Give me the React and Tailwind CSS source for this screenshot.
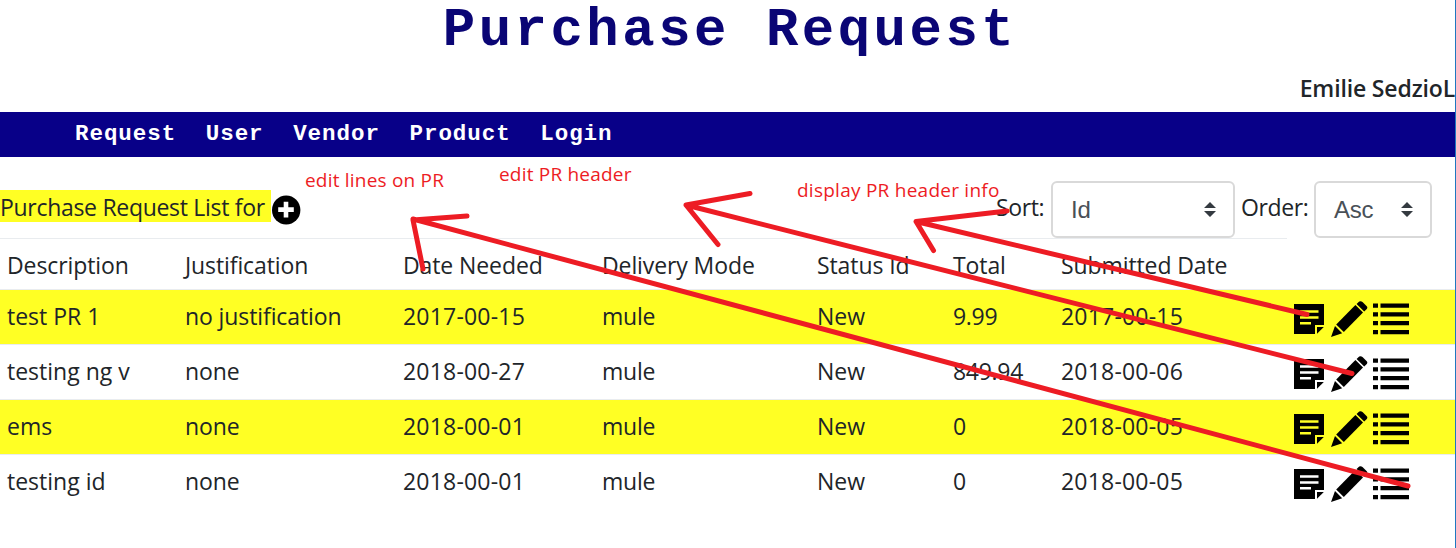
import React from "react";

const COLUMNS = [
  "Description",
  "Justification",
  "Date Needed",
  "Delivery Mode",
  "Status Id",
  "Total",
  "Submitted Date",
];

const ROWS = [
  ["test PR 1", "no justification", "2017-00-15", "mule", "New", "9.99", "2017-00-15"],
  ["testing ng v", "none", "2018-00-27", "mule", "New", "849.94", "2018-00-06"],
  ["ems", "none", "2018-00-01", "mule", "New", "0", "2018-00-05"],
  ["testing id", "none", "2018-00-01", "mule", "New", "0", "2018-00-05"],
];

const CELL_TRACKING = [
  "",
  "tracking-[-0.1px]",
  "tracking-[0.2px]",
  "tracking-[-0.2px]",
  "",
  "tracking-[-0.3px]",
  "tracking-[0.2px]",
];

const GRID =
  "grid grid-cols-[178px_218px_199px_215px_136px_108px_233px_168px] whitespace-nowrap";

function NoteIcon() {
  return (
    <svg className="h-[30px] w-[30px]" viewBox="0 0 30 30">
      <path d="M0 0H30V21H21V30H0Z" fill="#000" />
      <path d="M23 23H29.8L23 29.8Z" fill="#000" />
      <path d="M6 7.5H24.5M6 13.5H24.5M6 19.3H17" stroke="currentColor" strokeWidth="2.4" />
    </svg>
  );
}

function PencilIcon() {
  return (
    <svg className="h-[37px] w-[37px]" viewBox="0 0 37 37">
      <path d="M24.4 4L32 11.6L12.8 31L5.2 23.4Z" />
      <path d="M4 25L11.200 32.200L0 36Z" />
      <path d="M25.600 3L28.200 .6Q29.800 -.5 31.500 1L35.500 5Q37 6.400 35.800 8L33.200 10.600Z" />
    </svg>
  );
}

function ListIcon() {
  return (
    <svg className="h-[32px] w-[36px]" viewBox="0 0 36 32">
      <path d="M0 .5H5V4.7H0ZM7.500 .5H36V4.7H7.500ZM0 9.200H5V13.400H0ZM7.500 9.200H36V13.400H7.500ZM0 18H5V22.200H0ZM7.500 18H36V22.200H7.500ZM0 27H5V31.200H0ZM7.500 27H36V31.200H7.500Z" />
    </svg>
  );
}

function SelectBox({ value, className }) {
  return (
    <button
      className={
        "flex h-[57px] items-center justify-between rounded-[6px] border-2 border-[#d9d9d9] bg-white pr-[17px] pl-[18px] text-left font-['Liberation_Sans',sans-serif] text-[24px] leading-none text-[#495057] " +
        className
      }
    >
      <span className="tracking-[-0.2px]">{value}</span>
      <svg className="h-[15px] w-[12px]" viewBox="0 0 12 15" fill="#343a40">
        <path d="M0 6L6 0L12 6ZM0 9H12L6 15Z" />
      </svg>
    </button>
  );
}

export default function App() {
  return (
    <div className="relative h-[548px] w-[1456px] overflow-hidden border-r border-[#1f78c0] bg-white font-['Open_Sans','Noto_Sans',sans-serif] text-[23px] text-[#212529]">
      <h1 className="h-[72px] pl-[5px] text-center font-['Liberation_Mono',monospace] text-[54px] leading-[62px] font-bold tracking-[3.5px] whitespace-pre text-[#0a0575]">
        Purchase Request
      </h1>
      <div className="flex h-[40px] justify-end leading-[33px] font-semibold whitespace-nowrap">
        <span className="tracking-[-0.15px]">Emilie SedzioL</span>
      </div>
      <nav className="flex h-[45px] gap-[29.6px] bg-[#080088] pl-[75px] font-['Liberation_Mono',monospace] text-[22.5px] leading-[44px] font-bold tracking-[0.95px] text-white">
        <a>Request</a>
        <a>User</a>
        <a>Vendor</a>
        <a>Product</a>
        <a>Login</a>
      </nav>

      <div className="flex h-[81px] pt-[24px] whitespace-nowrap">
        <div className="mt-[9px] h-[32px] w-[271px] bg-[#ffff24] leading-[35px]">
          <span className="tracking-[-0.3px]">Purchase Request List for</span>
        </div>
        <svg className="mt-[14px] ml-px h-[30px] w-[29px]" viewBox="0 0 29 30">
          <ellipse cx="14.2" cy="15" rx="14.2" ry="14.6" />
          <path d="M14 6.800V22.400M6.200 14.600H21.800" stroke="#fff" strokeWidth="4.6" />
        </svg>
        <div className="ml-[695px] flex">
          <span className="w-[55px] pt-[9px] leading-[35px] tracking-[-0.4px]">Sort:</span>
          <SelectBox value="Id" className="w-[184px]" />
          <span className="w-[79px] pt-[9px] pl-[6px] leading-[35px] tracking-[-0.4px]">
            Order:
          </span>
          <SelectBox value="Asc" className="w-[118px]" />
        </div>
      </div>

      <div className={GRID + " h-[51px]"}>
        {COLUMNS.map((name) => (
          <div
            key={name}
            className="border-t border-[#e9ecef] pl-[7px] leading-[53px] tracking-[-0.1px]"
          >
            {name}
          </div>
        ))}
      </div>
      {ROWS.map((row, i) => (
        <div
          key={i}
          className={
            GRID +
            " h-[55px] border-t border-[#e9ecef] " +
            (i % 2 === 0 ? "bg-[#ffff24]" : "bg-white")
          }
        >
          {row.map((cell, j) => (
            <div key={j} className={"pl-[7px] leading-[53px] " + CELL_TRACKING[j]}>
              {cell}
            </div>
          ))}
          <div
            className={
              "flex pl-[7px] " + (i % 2 === 0 ? "text-[#ffff24]" : "text-white")
            }
          >
            <div className="mt-[14px] w-[37px]">
              <NoteIcon />
            </div>
            <div className="mt-[11px] w-[42px] text-black">
              <PencilIcon />
            </div>
            <div className="mt-[13px] text-black">
              <ListIcon />
            </div>
          </div>
        </div>
      ))}

      <div className="absolute top-[165px] left-[305px] text-[19px] leading-[30px] tracking-[0.2px] whitespace-nowrap text-[#ed1c24]">
        edit lines on PR
      </div>
      <div className="absolute top-[159px] left-[499px] text-[19px] leading-[30px] tracking-[0.2px] whitespace-nowrap text-[#ed1c24]">
        edit PR header
      </div>
      <div className="absolute top-[175px] left-[797px] text-[19px] leading-[30px] tracking-[0.25px] whitespace-nowrap text-[#ed1c24]">
        display PR header info
      </div>
      <svg
        className="absolute top-0 left-0 h-[548px] w-[1456px]"
        viewBox="0 0 1456 548"
        fill="none"
        stroke="#ed1c24"
        strokeWidth="5"
        strokeLinecap="round"
        strokeLinejoin="round"
      >
        <path d="M1408 486L413 219M467 216L413 220L423 269" />
        <path d="M1352 373.500L686 205M750 193.500L686 205L718 244.500" />
        <path d="M1307 314.500L916 221.500M1007 211L916 221.500L933.500 250.500" />
      </svg>
    </div>
  );
}
